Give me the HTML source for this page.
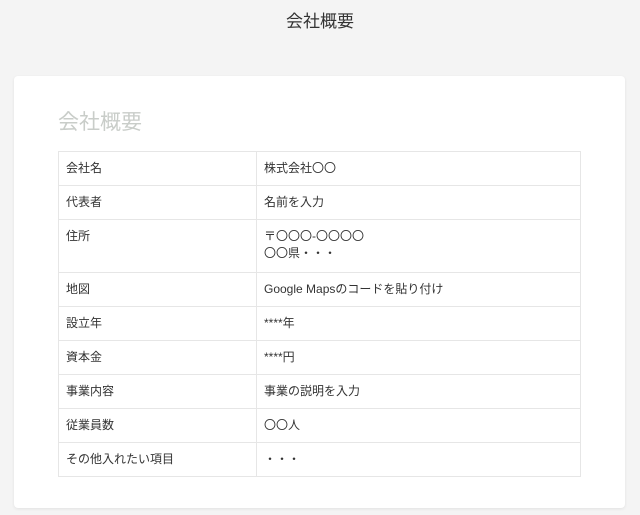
<!DOCTYPE html>
<html><head><meta charset="utf-8"><style>
body{margin:0;width:640px;height:515px;background:#f4f4f4;font-family:"Liberation Sans","Noto Sans CJK JP",sans-serif;overflow:hidden;position:relative}
.top{position:absolute;top:10px;left:0;width:640px;text-align:center;font-size:17px;color:#333;line-height:24px}
.card{position:absolute;left:14px;top:76px;width:611px;height:432px;background:#fff;border-radius:4px;box-shadow:0 1px 3px rgba(0,0,0,.08)}
h2{position:absolute;left:44px;top:33px;margin:0;font-weight:normal;font-size:21px;color:#c9cdc9;line-height:28px}
table{position:absolute;left:44px;top:75px;width:523px;border-collapse:collapse;font-size:12px;color:#333}
td{border:1px solid #e6e6e6;padding:8px 7px 0;vertical-align:top;line-height:17px;height:25px}
td:first-child{width:183px}
</style></head><body>
<div class="top">会社概要</div>
<div class="card">
<h2>会社概要</h2>
<table>
<tr><td>会社名</td><td>株式会社〇〇</td></tr>
<tr><td>代表者</td><td>名前を入力</td></tr>
<tr><td style="height:44px">住所</td><td>〒〇〇〇-〇〇〇〇<br>〇〇県・・・</td></tr>
<tr><td>地図</td><td>Google Mapsのコードを貼り付け</td></tr>
<tr><td>設立年</td><td>****年</td></tr>
<tr><td>資本金</td><td>****円</td></tr>
<tr><td>事業内容</td><td>事業の説明を入力</td></tr>
<tr><td>従業員数</td><td>〇〇人</td></tr>
<tr><td>その他入れたい項目</td><td>・・・</td></tr>
</table>
</div>
</body></html>
